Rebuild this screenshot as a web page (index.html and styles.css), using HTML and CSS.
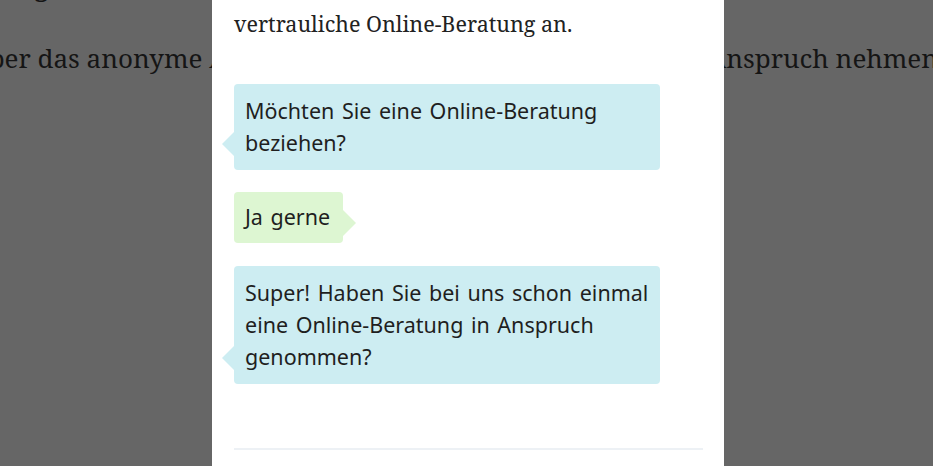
FILE: index.html
```html
<!DOCTYPE html>
<html lang="de">
<head>
<meta charset="utf-8">
<title>Online-Beratung</title>
<link rel="stylesheet" href="styles.css">
</head>
<body>
<div class="page">
  <p class="page-lead">Angebote</p>
  <div class="page-line">
    <span class="page-left">Über das anonyme Angebot</span>
    <span class="page-right">Anspruch nehmen können.</span>
  </div>
</div>

<div class="modal">
  <h2 class="modal-title">Wir bieten Ihnen eine kostenlose und vertrauliche Online-Beratung an.</h2>
  <div class="chat">
    <div class="bubble bubble-bot">Möchten Sie eine Online-Beratung beziehen?</div>
    <div class="bubble bubble-user">Ja gerne</div>
    <div class="bubble bubble-bot">Super! Haben Sie bei uns schon einmal eine Online-Beratung in Anspruch genommen?</div>
  </div>
  <div class="divider"></div>
</div>
</body>
</html>
```
FILE: styles.css
```css
html, body {
  margin: 0;
  height: 100%;
  overflow: hidden;
}
body {
  background: #666666;
  position: relative;
}
.page {
  color: #151515;
  font-family: "Noto Serif", "DejaVu Serif", serif;
}
.page-lead {
  margin: -28px 0 0 0;
  font-size: 24px;
  line-height: 32px;
  font-weight: 700;
  padding-left: 1px;
}
.page-line {
  display: flex;
  margin-top: 38px;
  font-size: 26px;
  line-height: 32px;
  white-space: nowrap;
}
.page-left {
  width: 212px;
  overflow: hidden;
  text-indent: -30px;
  flex: none;
}
.page-right {
  margin-left: 496px;
}
.modal {
  position: absolute;
  top: -60px;
  left: 212px;
  width: 512px;
  height: 600px;
  box-sizing: border-box;
  background: #ffffff;
  padding: 24px 21px 0 22px;
}
.modal-title {
  margin: 0;
  font-family: "Noto Serif", "DejaVu Serif", serif;
  font-weight: 400;
  font-size: 21.5px;
  line-height: 40px;
  color: #222222;
}
.chat {
  display: flex;
  flex-direction: column;
  align-items: flex-start;
  gap: 22px;
  margin-top: 40px;
}
.bubble {
  position: relative;
  max-width: 426px;
  box-sizing: border-box;
  padding: 11px 10px 11px 11px;
  border-radius: 4px;
  font-family: "Noto Sans", sans-serif;
  font-size: 21.5px;
  line-height: 32px;
  word-spacing: 2px;
  color: #1f1f1f;
}
.bubble-bot {
  background: #cdedf2;
}
.bubble-bot::before {
  content: "";
  position: absolute;
  left: -12px;
  bottom: 14px;
  border-style: solid;
  border-width: 12px 12px 12px 0;
  border-color: transparent #cdedf2 transparent transparent;
}
.bubble-user {
  background: #ddf6d2;
  padding: 9px 13px 10px 11px;
}
.bubble-user::after {
  content: "";
  position: absolute;
  right: -13px;
  bottom: 7px;
  border-style: solid;
  border-width: 13px 0 13px 13px;
  border-color: transparent transparent transparent #ddf6d2;
}
.chat .bubble-user + .bubble-bot {
  margin-top: 1px;
}
.divider {
  margin-top: 64px;
  border-top: 2px solid #edf1f5;
}
```
